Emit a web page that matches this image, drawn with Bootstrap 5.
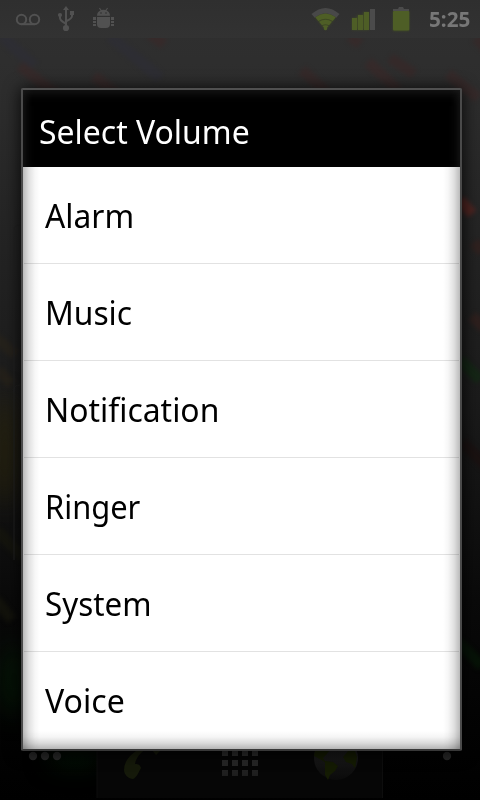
<!DOCTYPE html>
<html lang="en">
<head>
<meta charset="utf-8">
<meta name="viewport" content="width=device-width, initial-scale=1">
<title>Select Volume</title>
<link href="https://cdn.jsdelivr.net/npm/bootstrap@5.3.0/dist/css/bootstrap.min.css" rel="stylesheet">
<style>
body{font-family:"Noto Sans","Open Sans",sans-serif;background:#000}
.phone{width:480px;height:800px;background:linear-gradient(#303030 0,#2d2d2d 90px,#242424 230px,#1b1b1b 400px,#0a0a0a 600px,#030303 730px,#000 800px)}
.wallpaper{left:0;top:0}
.statusbar{height:38px;background:linear-gradient(#2f2f2f,#323232)}
.clock{font-size:21px;font-weight:700;line-height:38px;color:#777;width:43px;white-space:nowrap}
.clock span,.label{display:inline-block;transform-origin:0 50%}
.clock span{transform:scaleX(.985)}
.status-right{margin-right:9px}
.volume-dialog{width:441px;height:663px;margin:50px 0 0 21px;border:2px solid #4b4b4b;border-color:#505050 #4a4a4a #383838;border-radius:2px;box-shadow:0 1px 16px 1px rgba(0,0,0,.8)}
.dialog-title{height:77px;padding:7px 0 0 16px;background:#000;box-shadow:inset 0 9px 12px -7px #1c1c1c,inset 9px 0 12px -8px #1c1c1c,inset -9px 0 12px -8px #1c1c1c}
.label{font-size:33px;line-height:44px;white-space:nowrap;transform:scaleX(.962)}
.dialog-title .label{transform:scaleX(.968)}
.volume-list{height:582px;background:
 linear-gradient(to top,rgba(0,0,0,.29),rgba(0,0,0,.14) 6px,rgba(0,0,0,.04) 12px,transparent 18px),
 linear-gradient(to right,rgba(0,0,0,.27),rgba(0,0,0,.12) 6px,rgba(0,0,0,.03) 12px,transparent 17px),
 linear-gradient(to left,rgba(0,0,0,.27),rgba(0,0,0,.12) 6px,rgba(0,0,0,.03) 12px,transparent 17px),#fff}
.volume-row{height:97px;margin:0 1px;padding:1px 0 0 21px;border-bottom:1px solid rgba(0,0,0,.115);color:#000}
.volume-row:last-child{border-bottom:0;padding-top:0}
.volume-row:nth-child(3) .label{transform:scaleX(.966)}
.volume-row:nth-child(4) .label{transform:scaleX(.935)}
.volume-row:nth-child(5) .label{transform:scaleX(.949)}
.volume-row:last-child .label{transform:scaleX(.972)}
</style>
<script src="https://cdn.jsdelivr.net/npm/bootstrap@5.3.0/dist/js/bootstrap.bundle.min.js"></script>
</head>
<body class="m-0 overflow-hidden">
<div class="phone position-relative overflow-hidden">
  <svg class="wallpaper position-absolute" width="480" height="800" viewBox="0 0 480 800" aria-hidden="true">
    <defs>
      <filter id="soft" x="-30%" y="-30%" width="160%" height="160%" color-interpolation-filters="sRGB"><feGaussianBlur stdDeviation="2"/></filter>
      <filter id="glow" x="-100%" y="-100%" width="300%" height="300%" color-interpolation-filters="sRGB"><feGaussianBlur stdDeviation="12"/></filter>
      <linearGradient id="orb" x2="0" y2="1"><stop stop-color="#202020"/><stop offset=".5" stop-color="#171717"/><stop offset="1" stop-color="#0a0a0a"/></linearGradient>
      <linearGradient id="tile" x2="0" y2="1"><stop stop-color="#303030"/><stop offset="1" stop-color="#1d1d1d"/></linearGradient>
    </defs>
    <g filter="url(#soft)" stroke-width="11" fill="none" opacity=".65">
      <path d="M2 36 34 66M110 36l50 42" stroke="#2d2d36"/>
      <path d="M20 66l36 28M94 76l24 20M368 62l30 28M350 36l10 8M150 34l14 10M448 74l30 24" stroke="#3a2828"/>
      <path d="M302 70l24 22M390 58l24 16M476 38l10 10" stroke="#382727"/>
      <path d="M460 200l12 14" stroke="#64241f"/>
      <path d="M474 242l8 10M472 316l12 12" stroke="#35201d"/>
      <path d="M460 360l20 20" stroke="#112b13"/>
      <path d="M462 442l24 24" stroke="#1c100f"/>
      <path d="M-4 338l20 17M-2 370l14 14" stroke="#28231a"/>
      <path d="M-4 530l28 28M-4 600l16 20" stroke="#17170d"/>
      <path d="M458 642l24 24" stroke="#061907"/>
    </g>
    <g filter="url(#glow)">
      <ellipse cx="5" cy="450" rx="9" ry="55" fill="#29240b"/>
      <ellipse cx="14" cy="680" rx="9" ry="36" fill="#041c06"/>
      <ellipse cx="75" cy="758" rx="28" ry="8" fill="#031505"/>
    </g>
    <path d="M14 392V230q0-5 6-5M14 560V390q0-5 6-5" stroke="#222" fill="none"/>
    <path d="M97 740h286v58H97z" fill="#060606"/>
    <path d="M97 740v58M382.500 740v58" stroke="#0d0d0d"/>
    <g fill="#282828"><circle cx="33" cy="756" r="4.200"/><circle cx="45" cy="756" r="4.200"/><circle cx="57" cy="756" r="4.200"/><circle cx="447" cy="756" r="4.200"/></g>
    <path d="M139 749q-15 9-15 21c0 5 5 9 9 9 3-1 6-7 8-11-1-4-4-4-6-4 1-6 5-11 11-15zM152 750l4 5 5-5z" fill="#15190a"/>
    <g fill="url(#tile)">
      <path d="M222 750h6v6h-6zM232 750h6v6h-6zM242 750h6v6h-6zM252 750h6v6h-6zM222 760h6v6h-6zM232 760h6v6h-6zM242 760h6v6h-6zM252 760h6v6h-6zM222 770h6v6h-6zM232 770h6v6h-6zM242 770h6v6h-6zM252 770h6v6h-6z"/>
    </g>
    <circle cx="336" cy="758" r="22" fill="url(#orb)"/>
    <path d="M315 750h15l-4 5-3 3 3 5-6-4-6-3zM325 761l8 1 5 4-3 5-5 4-2 5-3-5zM348 751h7l2 6-2 11-3-4-6-2-3-5z" fill="#141b03"/>
  </svg>

  <header class="statusbar position-relative d-flex align-items-start">
    <svg width="120" height="38" viewBox="0 0 120 38" role="img" aria-label="Voicemail, USB, debugging">
      <g fill="none" stroke="#515151" stroke-width="2">
        <circle cx="21.500" cy="19.500" r="4.700"/><circle cx="34.500" cy="19.500" r="4.700"/><path d="M21.500 24.200h13"/>
        <path d="M66 9v18M60 16v2q0 2.500 5.500 5.500M72 13v3q0 2.500-5.500 5"/>
      </g>
      <g fill="#515151">
        <path d="M66 6l3 4h-6zM70 11h4v4h-4z"/><circle cx="60" cy="15" r="2.100"/><circle cx="66" cy="28" r="3.100"/>
        <path d="M97 15.700c0-3 1.700-4.500 3.500-5.200L99 8.300l.8-.5 1.700 2.300q2-.5 4 0l1.700-2.300.8.500-1.500 2.200c1.800.7 3.500 2.200 3.500 5.200z"/>
        <path d="M97 17h13v7q0 4-4 4h-5q-4 0-4-4z"/>
        <path d="M93 17h3v3h-3zM93 21h3v2h-3zM93 24h3v2h-3zM111 17h3v3h-3zM111 21h3v2h-3zM111 24h3v2h-3z"/>
      </g>
      <circle cx="101" cy="13" r=".8" fill="#2f2f2f"/><circle cx="106" cy="13" r=".8" fill="#2f2f2f"/>
    </svg>
    <svg class="ms-auto status-right" width="120" height="38" viewBox="300 0 120 38" role="img" aria-label="Wi-Fi, signal, battery">
      <defs><filter id="halo" x="-30%" y="-30%" width="160%" height="160%" color-interpolation-filters="sRGB"><feGaussianBlur stdDeviation="1.300"/></filter></defs>
      <g filter="url(#halo)" fill="#435020" opacity=".75"><path d="M315 17q10.500-7 21 0l-10.500 13zM352 18h5v-3h6v-3h6v18h-17zM393 11h16v20h-16z"/></g>
      <path d="M311.500 14q14-12 28 0l-3.200 3.800q-10.800-8.800-21.600 0z" fill="#484848"/>
      <path d="M315.300 17.200q10.200-7.200 20.400 0l-3 3.700q-7.200-4.500-14.400 0zM319 21.700q6.500-4 13 0l-3 3.600q-3.500-2-7 0z" fill="#4e5e26"/>
      <path d="M322.500 26q3-1.600 6 0l-1.500 1.800a1.700 1.700 0 1 1-3 0z" fill="#4e5e26"/>
      <path d="M352 18h5v12h-5zM358 15h5v15h-5zM364 12h5v18h-5z" fill="#4e5e26"/>
      <path d="M370 9h5v21h-5z" fill="#4b4b4b"/>
      <path d="M393 11V9h5l1-2h4l1 2h5v2z" fill="#4b4b4b"/><rect x="393" y="11" width="16.300" height="19.500" rx="1" fill="#4e5e26"/>
    </svg>
    <div class="clock me-2"><span>5:25</span></div>
  </header>

  <main class="volume-dialog position-relative">
    <div class="dialog-title d-flex align-items-center text-white"><h1 class="label m-0 fw-normal">Select Volume</h1></div>
    <div class="volume-list d-flex flex-column">
      <div class="volume-row d-flex align-items-center"><span class="label">Alarm</span></div>
      <div class="volume-row d-flex align-items-center"><span class="label">Music</span></div>
      <div class="volume-row d-flex align-items-center"><span class="label">Notification</span></div>
      <div class="volume-row d-flex align-items-center"><span class="label">Ringer</span></div>
      <div class="volume-row d-flex align-items-center"><span class="label">System</span></div>
      <div class="volume-row d-flex align-items-center"><span class="label">Voice</span></div>
    </div>
  </main>
</div>
</body>
</html>
